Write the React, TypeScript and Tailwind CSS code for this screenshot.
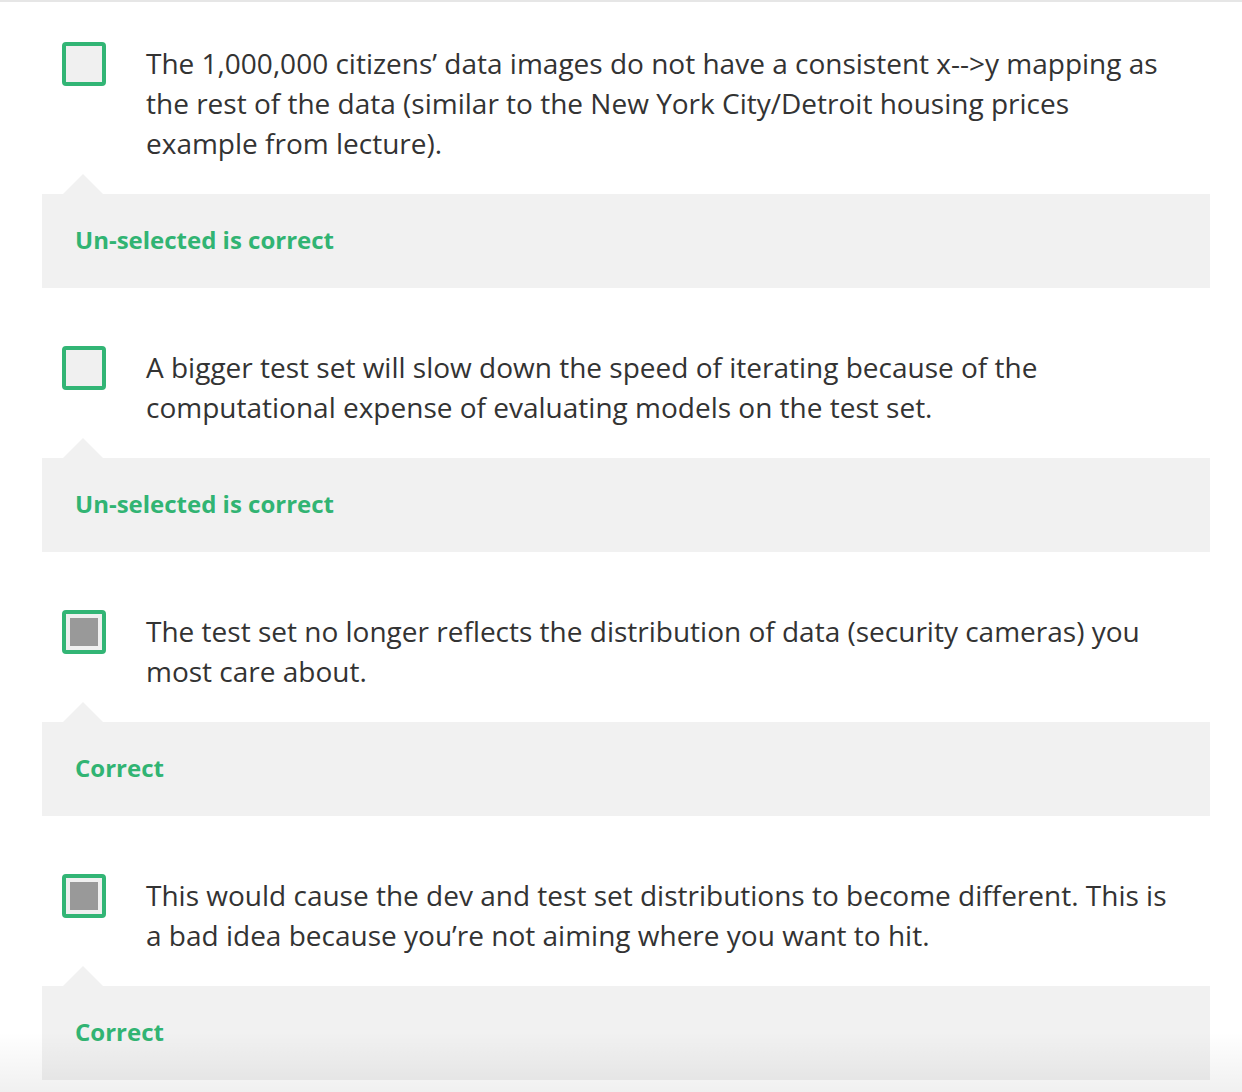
import React from "react";

type Item = { text: string; checked: boolean; feedback: string };

const items: Item[] = [
  {
    text: "The 1,000,000 citizens’ data images do not have a consistent x-->y mapping as the rest of the data (similar to the New York City/Detroit housing prices example from lecture).",
    checked: false,
    feedback: "Un-selected is correct",
  },
  {
    text: "A bigger test set will slow down the speed of iterating because of the computational expense of evaluating models on the test set.",
    checked: false,
    feedback: "Un-selected is correct",
  },
  {
    text: "The test set no longer reflects the distribution of data (security cameras) you most care about.",
    checked: true,
    feedback: "Correct",
  },
  {
    text: "This would cause the dev and test set distributions to become different. This is a bad idea because you’re not aiming where you want to hit.",
    checked: true,
    feedback: "Correct",
  },
];

function Checkbox({ checked }: { checked: boolean }) {
  return (
    <div className="w-[44px] h-[44px] shrink-0 rounded-[4px] border-[4px] border-[#32b575] bg-[#f0f0f0] flex items-center justify-center">
      {checked && <div className="w-[28px] h-[28px] bg-[#999999]" />}
    </div>
  );
}

export default function App() {
  return (
    <div
      className="relative h-[1092px] w-[1242px] overflow-hidden bg-white border-t-2 border-[#e6e6e6]"
      style={{ fontFamily: '"Open Sans", "Noto Sans", sans-serif' }}
    >
      <div className="pt-[40px] pl-[42px] pr-[32px] flex flex-col gap-[58px]">
        {items.map((it, i) => (
          <div key={i} className="flex flex-col">
            <div className="flex pl-[20px]">
              <Checkbox checked={it.checked} />
              <p className="ml-[40px] mt-[1px] w-[1032px] text-[28px] leading-[40px] text-[#333333]">
                {it.text}
              </p>
            </div>
            <div className="relative mt-[31px] h-[94px] bg-[#f1f1f1] flex items-center px-[33px]">
              <div className="absolute left-[21px] top-[-20px] w-0 h-0 border-l-[20px] border-r-[20px] border-b-[20px] border-l-transparent border-r-transparent border-b-[#f1f1f1]" />
              <span className="text-[24px] leading-[32px] mt-[-2px] font-bold text-[#31b473]">{it.feedback}</span>
            </div>
          </div>
        ))}
      </div>
      <div className="pointer-events-none absolute left-0 right-0 bottom-0 h-[60px] bg-gradient-to-b from-transparent to-[rgba(0,0,0,0.06)]" />
    </div>
  );
}
